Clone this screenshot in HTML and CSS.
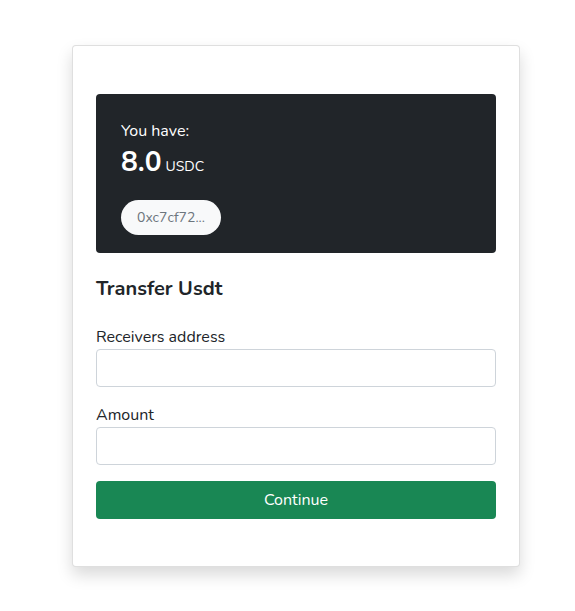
FILE: index.html
```html
<!DOCTYPE html>
<html lang="en">
<head>
<meta charset="utf-8">
<title>Transfer</title>
<link rel="stylesheet" href="styles.css">
</head>
<body>
<main class="page">
  <section class="card">
    <div class="balance">
      <div class="balance-label">You have:</div>
      <div class="balance-amount"><span class="amount">8.0</span> <span class="unit">USDC</span></div>
      <button class="address-pill" type="button">0xc7cf72...</button>
    </div>
    <h5 class="title">Transfer Usdt</h5>
    <form class="form">
      <div class="field">
        <label class="label" for="receiver">Receivers address</label>
        <input class="input" id="receiver" type="text">
      </div>
      <div class="field">
        <label class="label" for="amount">Amount</label>
        <input class="input" id="amount" type="text">
      </div>
      <button class="btn-continue" type="button">Continue</button>
    </form>
  </section>
</main>
</body>
</html>
```

FILE: styles.css
```css
* { box-sizing: border-box; }
html, body { margin: 0; padding: 0; background: #fff; }
body {
  font-family: "Nunito", "Lato", "Open Sans", sans-serif;
  font-size: 16px;
  line-height: 1.5;
  color: #212529;
  min-height: 611px;
}
.page {
  padding: 45px 0 44px 72px;
}
.card {
  width: 448px;
  background: #fff;
  border: 1px solid rgba(0,0,0,0.125);
  border-radius: 4px;
  box-shadow: 0 8px 16px rgba(0,0,0,0.15);
  padding: 48px 23px 47px;
}
.balance {
  background: #212529;
  border-radius: 4px;
  color: #fff;
  padding: 25px 25px 19px;
  height: 159px;
}
.balance-label {
  font-size: 16px;
  line-height: 24px;
  margin-bottom: 2px;
}
.balance-amount {
  line-height: 34px;
  display: flex;
  align-items: baseline;
  gap: 4px;
}
.amount {
  font-size: 28px;
  font-weight: 700;
}
.unit {
  font-size: 14px;
}
.address-pill {
  margin-top: 16px;
  height: 35px;
  width: 100px;
  padding: 0 16px;
  border: none;
  border-radius: 18px;
  background: #f8f9fa;
  color: #6c757d;
  font-family: inherit;
  font-size: 14px;
  text-align: left;
  white-space: nowrap;
}
.title {
  font-size: 20px;
  font-weight: 700;
  line-height: 24px;
  margin: 24px 0 24px;
}
.form { display: flex; flex-direction: column; }
.field { display: flex; flex-direction: column; margin-bottom: 16px; }
.label {
  font-size: 16px;
  line-height: 24px;
  color: #212529;
}
.input {
  height: 38px;
  border: 1px solid #ced4da;
  border-radius: 4px;
  background: #fff;
  font-family: inherit;
  font-size: 16px;
  padding: 6px 12px;
}
.btn-continue {
  height: 38px;
  border: none;
  border-radius: 4px;
  background: #198754;
  color: #fff;
  font-family: inherit;
  font-size: 16px;
}
```
